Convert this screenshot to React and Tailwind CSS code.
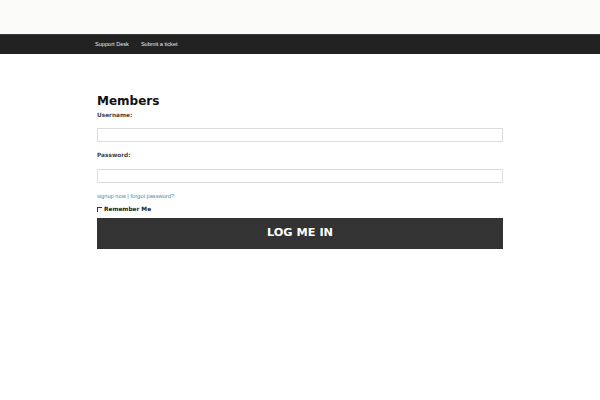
export default function App() {
  return (
    <div className="w-[600px] h-[400px] bg-white font-['DejaVu_Sans',sans-serif]">
      <div className="h-[34px] bg-[#fbfbfa]" />
      <nav className="h-5 bg-[#222] border-t border-[#3a3a3a] flex items-center pl-[95px] gap-[12px] font-['Liberation_Sans',Arial,sans-serif] text-[5.6px] text-[#e8e8e8]">
        <a>Support Desk</a>
        <a>Submit a ticket</a>
      </nav>
      <main className="w-[406px] ml-[97px] pt-[39px]">
        <h1 className="text-[12px] font-bold leading-[16px] text-[#111]">Members</h1>
        <label className="block mt-[2px] text-[5.8px] font-bold text-[#444] leading-[9px]">Username:</label>
        <div className="mt-[8px] h-[14px] border border-[#dcdcdc] bg-white" />
        <label className="block mt-[9px] text-[5.8px] font-bold text-[#444] leading-[9px]">Password:</label>
        <div className="mt-[9px] h-[14px] border border-[#dcdcdc] bg-white" />
        <p className="mt-[9px] text-[5.7px] leading-[9px] font-['Liberation_Sans',Arial,sans-serif] text-[#4a8bb4]">
          <a>signup now</a> | <a>forgot password?</a>
        </p>
        <div className="mt-[4px] flex items-center gap-[2px] text-[5.8px] font-bold text-[#222] leading-[9px]">
          <span className="w-[5px] h-[5px] border-t border-l border-[#333]" />
          <span>Remember Me</span>
        </div>
        <button className="mt-[4px] w-full h-[31px] bg-[#333] text-white text-[11.3px] font-bold">
          LOG ME IN
        </button>
      </main>
    </div>
  );
}
